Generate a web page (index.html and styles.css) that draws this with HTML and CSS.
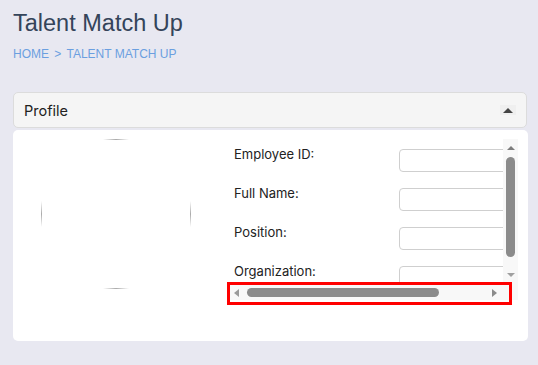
FILE: index.html
```html
<!DOCTYPE html>
<html lang="en">
<head>
  <meta charset="UTF-8" />
  <meta name="viewport" content="width=device-width, initial-scale=1.0"/>
  <title>Talent Match Up</title>
  <link rel="stylesheet" href="styles.css">
</head>
<body>

  <h1 class="page-title">Talent Match Up</h1>
  <div class="breadcrumb">HOME <span class="sep">&gt;</span> TALENT MATCH UP</div>

  <div class="panel-header">
    <span>Profile</span>
    <span class="collapse-btn"></span>
  </div>

  <div class="panel-body">
    <div class="photo-col">
      <svg class="photo" width="150" height="150" viewBox="0 0 150 150">
        <defs>
          <linearGradient id="fadeH" x1="0" x2="1" y1="0" y2="0">
            <stop offset="0" stop-color="#aaa" stop-opacity="0"/>
            <stop offset="0.5" stop-color="#aaa" stop-opacity="1"/>
            <stop offset="1" stop-color="#aaa" stop-opacity="0"/>
          </linearGradient>
          <linearGradient id="fadeV" x1="0" x2="0" y1="0" y2="1">
            <stop offset="0" stop-color="#aaa" stop-opacity="0"/>
            <stop offset="0.5" stop-color="#aaa" stop-opacity="1"/>
            <stop offset="1" stop-color="#aaa" stop-opacity="0"/>
          </linearGradient>
        </defs>
        <rect x="62" y="0" width="26" height="1" fill="url(#fadeH)"/>
        <rect x="62" y="149" width="26" height="1" fill="url(#fadeH)"/>
        <rect x="0" y="62" width="1" height="26" fill="url(#fadeV)"/>
        <rect x="149" y="62" width="1" height="26" fill="url(#fadeV)"/>
      </svg>
    </div>

    <div class="scroll-box">
      <div class="scroll-view">
        <div class="field-row">
          <label>Employee ID:</label>
          <input type="text">
        </div>
        <div class="field-row">
          <label>Full Name:</label>
          <input type="text">
        </div>
        <div class="field-row">
          <label>Position:</label>
          <input type="text">
        </div>
        <div class="field-row">
          <label>Organization:</label>
          <input type="text">
        </div>
      </div>

      <div class="vscroll">
        <span class="arrow up"></span>
        <span class="vthumb"></span>
        <span class="arrow down"></span>
      </div>

      <div class="hscroll">
        <span class="arrow left"></span>
        <span class="hthumb"></span>
        <span class="arrow right"></span>
      </div>

      <div class="corner"></div>

      <!-- highlight around the horizontal scrollbar -->
      <div class="highlight"></div>
    </div>
  </div>

</body>
</html>
```

FILE: styles.css
```css
* { margin: 0; padding: 0; box-sizing: border-box; }

body {
  font-family: 'Liberation Sans', Arial, sans-serif;
  background-color: #e8e8f1;
  padding: 9px 10px 0 13px;
  overflow: hidden;
}

.page-title {
  font-size: 23.5px;
  font-weight: normal;
  line-height: 28px;
  color: #34445a;
}

.breadcrumb {
  margin-top: 9px;
  font-size: 12px;
  line-height: 16px;
  height: 16px;
  color: #6b9fe0;
}

.breadcrumb .sep {
  margin: 0 2px;
}

.panel-header {
  margin-top: 30px;
  width: 514px;
  height: 36px;
  background-color: #f5f5f5;
  border: 1px solid #dcdcdc;
  border-radius: 5px;
  display: flex;
  align-items: center;
  justify-content: space-between;
  padding: 0 10px 0 10px;
  font-family: Inter, 'Noto Sans', sans-serif;
  font-size: 14.5px;
  color: #222;
}

.collapse-btn {
  width: 16px;
  height: 10px;
  display: flex;
  align-items: center;
  justify-content: center;
  background-color: #efefef;
}

.collapse-btn::before {
  content: '';
  border-left: 5px solid transparent;
  border-right: 5px solid transparent;
  border-bottom: 5px solid #444;
}

.panel-body {
  margin-top: 2px;
  width: 515px;
  height: 211px;
  background-color: #fff;
  border-radius: 5px;
  display: flex;
  padding: 9px 10px 0 28px;
}

.photo-col {
  width: 187px;
}

.photo {
  display: block;
}

.scroll-box {
  position: relative;
  width: 290px;
  height: 161px;
  display: grid;
  grid-template-columns: 275px 15px;
  grid-template-rows: 146px 15px;
}

.scroll-view {
  overflow: hidden;
  padding: 7px 0 0 6px;
  font-family: Inter, 'Noto Sans', sans-serif;
  font-size: 13px;
  color: #222;
}

.field-row {
  display: flex;
  align-items: flex-start;
  height: 39px;
}

.field-row label {
  width: 165px;
  flex-shrink: 0;
  line-height: 16px;
}

.field-row input {
  margin-top: 3px;
  width: 150px;
  flex-shrink: 0;
  height: 23px;
  border: 1px solid #cfcfcf;
  border-radius: 4px;
  background: #fff;
}

.vscroll, .hscroll, .corner {
  background-color: #f8f8f8;
}

.vscroll {
  display: flex;
  flex-direction: column;
  align-items: center;
  padding-top: 7px;
}

.vthumb {
  width: 9px;
  height: 100px;
  border-radius: 5px;
  background-color: #8b8b8b;
  margin: 7px 0 16px;
}

.hscroll {
  display: flex;
  align-items: center;
  padding-left: 6px;
}

.hthumb {
  width: 192px;
  height: 9px;
  border-radius: 5px;
  background-color: #8b8b8b;
  margin: 0 53px 0 8px;
}

.arrow {
  width: 0;
  height: 0;
}

.arrow.up {
  border-left: 4px solid transparent;
  border-right: 4px solid transparent;
  border-bottom: 4px solid #7d7d7d;
}

.arrow.down {
  border-left: 4px solid transparent;
  border-right: 4px solid transparent;
  border-top: 4px solid #a0a0a0;
}

.arrow.left {
  border-top: 4px solid transparent;
  border-bottom: 4px solid transparent;
  border-right: 5px solid #9a9a9a;
}

.arrow.right {
  border-top: 4px solid transparent;
  border-bottom: 4px solid transparent;
  border-left: 5px solid #8b8b8b;
}

.highlight {
  position: absolute;
  left: -1px;
  top: 143px;
  width: 285px;
  height: 23px;
  border: 3px solid #f00;
}
```
